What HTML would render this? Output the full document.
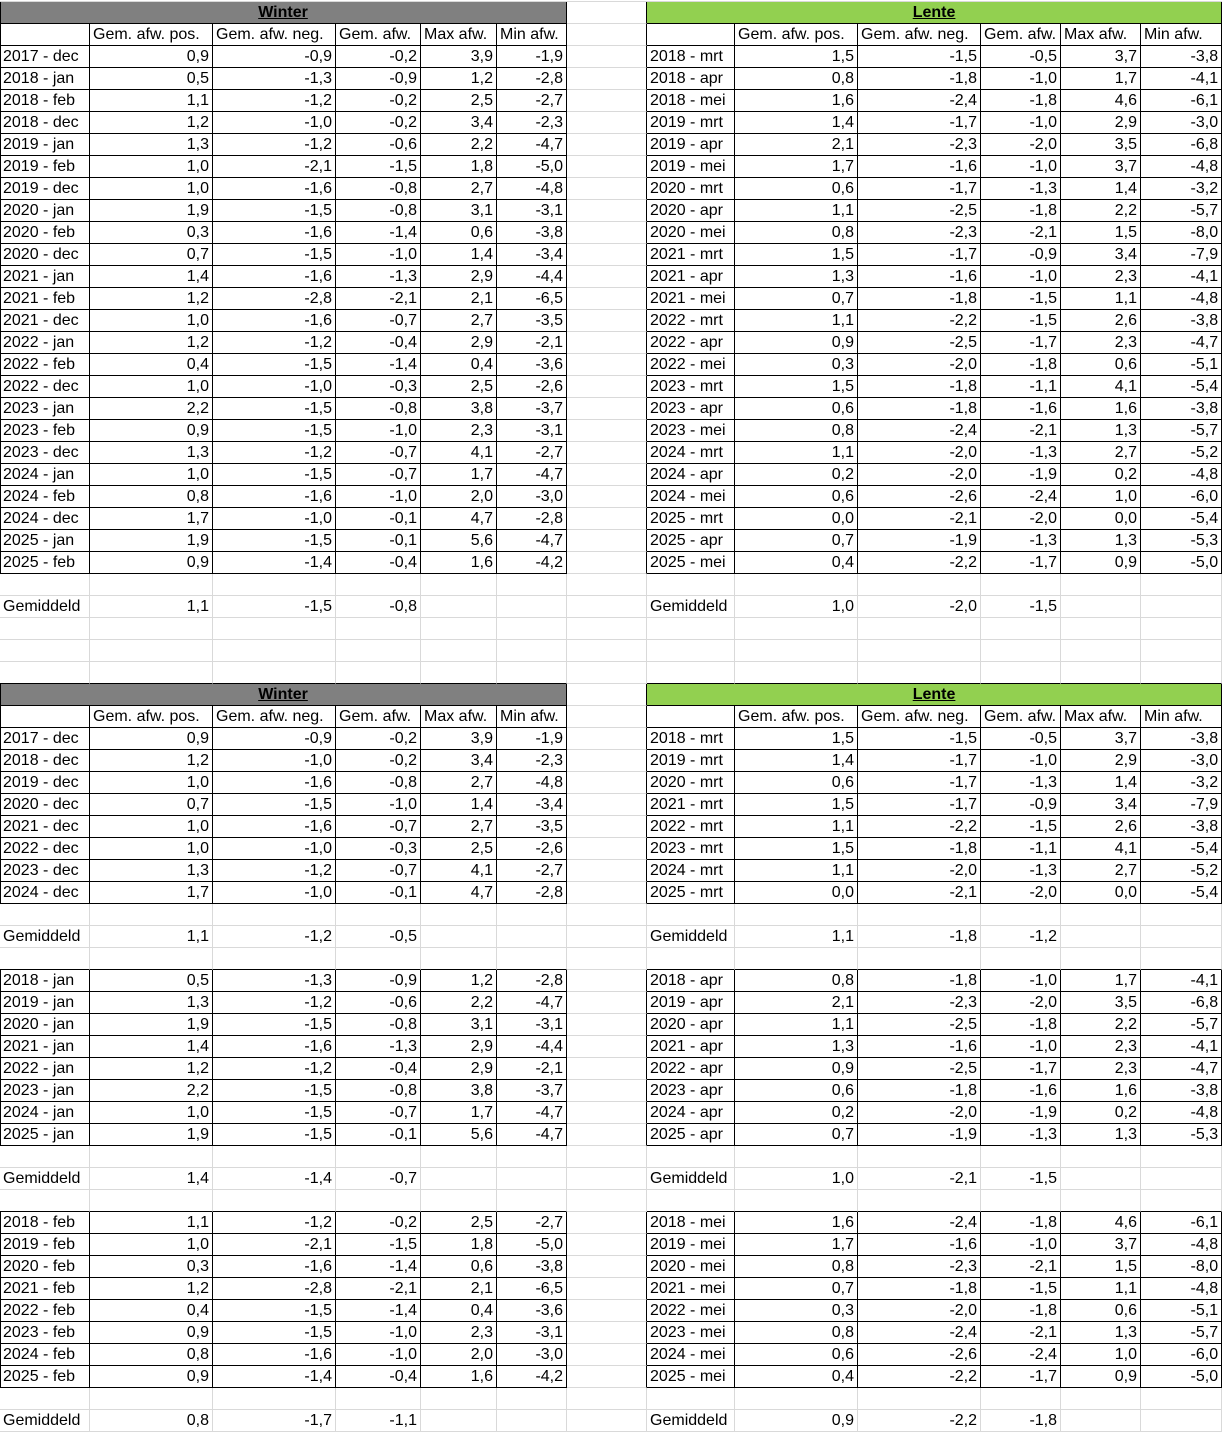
<!DOCTYPE html>
<html><head><meta charset="utf-8"><style>
html,body{margin:0;padding:0;background:#fff;}
body{padding-top:1px;}
table{border-collapse:separate;border-spacing:0;table-layout:fixed;width:1222px;font-family:"Liberation Sans",Arial,sans-serif;font-size:16px;color:#000;border-top:1px solid #d9d9d9;}
td{height:20px;padding:1px 3px 0 3px;border-right:1px solid #d9d9d9;border-bottom:1px solid #d9d9d9;text-align:right;white-space:nowrap;overflow:hidden;line-height:20px;}
tr td:first-child,td.g+td{text-align:left;}
tr.d td{border-right-color:#000;border-bottom-color:#000;}
tr.d td.g{border-bottom-color:#d9d9d9;}
tr.d td:first-child{box-shadow:inset 1px 0 #000;}
tr.a td{border-bottom-color:#000;}
tr.a td.g{border-bottom-color:#d9d9d9;}
td.w{background:#808080;text-align:center!important;font-weight:bold;text-decoration:underline;}
td.n{background:#92d050;text-align:center!important;font-weight:bold;text-decoration:underline;}
tr.h td{text-align:left;}
</style></head><body>
<table>
<colgroup><col style="width:90px"><col style="width:123px"><col style="width:123px"><col style="width:85px"><col style="width:76px"><col style="width:70px"><col style="width:80px"><col style="width:88px"><col style="width:123px"><col style="width:123px"><col style="width:80px"><col style="width:80px"><col style="width:81px"></colgroup>
<tr class="d"><td colspan="6" class="w">Winter</td><td class="g"></td><td colspan="6" class="n">Lente</td></tr>
<tr class="d h"><td></td><td>Gem. afw. pos.</td><td>Gem. afw. neg.</td><td>Gem. afw.</td><td>Max afw.</td><td>Min afw.</td><td class="g"></td><td></td><td>Gem. afw. pos.</td><td>Gem. afw. neg.</td><td>Gem. afw.</td><td>Max afw.</td><td>Min afw.</td></tr>
<tr class="d"><td>2017 - dec</td><td>0,9</td><td>-0,9</td><td>-0,2</td><td>3,9</td><td>-1,9</td><td class="g"></td><td>2018 - mrt</td><td>1,5</td><td>-1,5</td><td>-0,5</td><td>3,7</td><td>-3,8</td></tr>
<tr class="d"><td>2018 - jan</td><td>0,5</td><td>-1,3</td><td>-0,9</td><td>1,2</td><td>-2,8</td><td class="g"></td><td>2018 - apr</td><td>0,8</td><td>-1,8</td><td>-1,0</td><td>1,7</td><td>-4,1</td></tr>
<tr class="d"><td>2018 - feb</td><td>1,1</td><td>-1,2</td><td>-0,2</td><td>2,5</td><td>-2,7</td><td class="g"></td><td>2018 - mei</td><td>1,6</td><td>-2,4</td><td>-1,8</td><td>4,6</td><td>-6,1</td></tr>
<tr class="d"><td>2018 - dec</td><td>1,2</td><td>-1,0</td><td>-0,2</td><td>3,4</td><td>-2,3</td><td class="g"></td><td>2019 - mrt</td><td>1,4</td><td>-1,7</td><td>-1,0</td><td>2,9</td><td>-3,0</td></tr>
<tr class="d"><td>2019 - jan</td><td>1,3</td><td>-1,2</td><td>-0,6</td><td>2,2</td><td>-4,7</td><td class="g"></td><td>2019 - apr</td><td>2,1</td><td>-2,3</td><td>-2,0</td><td>3,5</td><td>-6,8</td></tr>
<tr class="d"><td>2019 - feb</td><td>1,0</td><td>-2,1</td><td>-1,5</td><td>1,8</td><td>-5,0</td><td class="g"></td><td>2019 - mei</td><td>1,7</td><td>-1,6</td><td>-1,0</td><td>3,7</td><td>-4,8</td></tr>
<tr class="d"><td>2019 - dec</td><td>1,0</td><td>-1,6</td><td>-0,8</td><td>2,7</td><td>-4,8</td><td class="g"></td><td>2020 - mrt</td><td>0,6</td><td>-1,7</td><td>-1,3</td><td>1,4</td><td>-3,2</td></tr>
<tr class="d"><td>2020 - jan</td><td>1,9</td><td>-1,5</td><td>-0,8</td><td>3,1</td><td>-3,1</td><td class="g"></td><td>2020 - apr</td><td>1,1</td><td>-2,5</td><td>-1,8</td><td>2,2</td><td>-5,7</td></tr>
<tr class="d"><td>2020 - feb</td><td>0,3</td><td>-1,6</td><td>-1,4</td><td>0,6</td><td>-3,8</td><td class="g"></td><td>2020 - mei</td><td>0,8</td><td>-2,3</td><td>-2,1</td><td>1,5</td><td>-8,0</td></tr>
<tr class="d"><td>2020 - dec</td><td>0,7</td><td>-1,5</td><td>-1,0</td><td>1,4</td><td>-3,4</td><td class="g"></td><td>2021 - mrt</td><td>1,5</td><td>-1,7</td><td>-0,9</td><td>3,4</td><td>-7,9</td></tr>
<tr class="d"><td>2021 - jan</td><td>1,4</td><td>-1,6</td><td>-1,3</td><td>2,9</td><td>-4,4</td><td class="g"></td><td>2021 - apr</td><td>1,3</td><td>-1,6</td><td>-1,0</td><td>2,3</td><td>-4,1</td></tr>
<tr class="d"><td>2021 - feb</td><td>1,2</td><td>-2,8</td><td>-2,1</td><td>2,1</td><td>-6,5</td><td class="g"></td><td>2021 - mei</td><td>0,7</td><td>-1,8</td><td>-1,5</td><td>1,1</td><td>-4,8</td></tr>
<tr class="d"><td>2021 - dec</td><td>1,0</td><td>-1,6</td><td>-0,7</td><td>2,7</td><td>-3,5</td><td class="g"></td><td>2022 - mrt</td><td>1,1</td><td>-2,2</td><td>-1,5</td><td>2,6</td><td>-3,8</td></tr>
<tr class="d"><td>2022 - jan</td><td>1,2</td><td>-1,2</td><td>-0,4</td><td>2,9</td><td>-2,1</td><td class="g"></td><td>2022 - apr</td><td>0,9</td><td>-2,5</td><td>-1,7</td><td>2,3</td><td>-4,7</td></tr>
<tr class="d"><td>2022 - feb</td><td>0,4</td><td>-1,5</td><td>-1,4</td><td>0,4</td><td>-3,6</td><td class="g"></td><td>2022 - mei</td><td>0,3</td><td>-2,0</td><td>-1,8</td><td>0,6</td><td>-5,1</td></tr>
<tr class="d"><td>2022 - dec</td><td>1,0</td><td>-1,0</td><td>-0,3</td><td>2,5</td><td>-2,6</td><td class="g"></td><td>2023 - mrt</td><td>1,5</td><td>-1,8</td><td>-1,1</td><td>4,1</td><td>-5,4</td></tr>
<tr class="d"><td>2023 - jan</td><td>2,2</td><td>-1,5</td><td>-0,8</td><td>3,8</td><td>-3,7</td><td class="g"></td><td>2023 - apr</td><td>0,6</td><td>-1,8</td><td>-1,6</td><td>1,6</td><td>-3,8</td></tr>
<tr class="d"><td>2023 - feb</td><td>0,9</td><td>-1,5</td><td>-1,0</td><td>2,3</td><td>-3,1</td><td class="g"></td><td>2023 - mei</td><td>0,8</td><td>-2,4</td><td>-2,1</td><td>1,3</td><td>-5,7</td></tr>
<tr class="d"><td>2023 - dec</td><td>1,3</td><td>-1,2</td><td>-0,7</td><td>4,1</td><td>-2,7</td><td class="g"></td><td>2024 - mrt</td><td>1,1</td><td>-2,0</td><td>-1,3</td><td>2,7</td><td>-5,2</td></tr>
<tr class="d"><td>2024 - jan</td><td>1,0</td><td>-1,5</td><td>-0,7</td><td>1,7</td><td>-4,7</td><td class="g"></td><td>2024 - apr</td><td>0,2</td><td>-2,0</td><td>-1,9</td><td>0,2</td><td>-4,8</td></tr>
<tr class="d"><td>2024 - feb</td><td>0,8</td><td>-1,6</td><td>-1,0</td><td>2,0</td><td>-3,0</td><td class="g"></td><td>2024 - mei</td><td>0,6</td><td>-2,6</td><td>-2,4</td><td>1,0</td><td>-6,0</td></tr>
<tr class="d"><td>2024 - dec</td><td>1,7</td><td>-1,0</td><td>-0,1</td><td>4,7</td><td>-2,8</td><td class="g"></td><td>2025 - mrt</td><td>0,0</td><td>-2,1</td><td>-2,0</td><td>0,0</td><td>-5,4</td></tr>
<tr class="d"><td>2025 - jan</td><td>1,9</td><td>-1,5</td><td>-0,1</td><td>5,6</td><td>-4,7</td><td class="g"></td><td>2025 - apr</td><td>0,7</td><td>-1,9</td><td>-1,3</td><td>1,3</td><td>-5,3</td></tr>
<tr class="d"><td>2025 - feb</td><td>0,9</td><td>-1,4</td><td>-0,4</td><td>1,6</td><td>-4,2</td><td class="g"></td><td>2025 - mei</td><td>0,4</td><td>-2,2</td><td>-1,7</td><td>0,9</td><td>-5,0</td></tr>
<tr><td></td><td></td><td></td><td></td><td></td><td></td><td class="g"></td><td></td><td></td><td></td><td></td><td></td><td></td></tr>
<tr><td>Gemiddeld</td><td>1,1</td><td>-1,5</td><td>-0,8</td><td></td><td></td><td class="g"></td><td>Gemiddeld</td><td>1,0</td><td>-2,0</td><td>-1,5</td><td></td><td></td></tr>
<tr><td></td><td></td><td></td><td></td><td></td><td></td><td class="g"></td><td></td><td></td><td></td><td></td><td></td><td></td></tr>
<tr><td></td><td></td><td></td><td></td><td></td><td></td><td class="g"></td><td></td><td></td><td></td><td></td><td></td><td></td></tr>
<tr class="a"><td></td><td></td><td></td><td></td><td></td><td></td><td class="g"></td><td></td><td></td><td></td><td></td><td></td><td></td></tr>
<tr class="d"><td colspan="6" class="w">Winter</td><td class="g"></td><td colspan="6" class="n">Lente</td></tr>
<tr class="d h"><td></td><td>Gem. afw. pos.</td><td>Gem. afw. neg.</td><td>Gem. afw.</td><td>Max afw.</td><td>Min afw.</td><td class="g"></td><td></td><td>Gem. afw. pos.</td><td>Gem. afw. neg.</td><td>Gem. afw.</td><td>Max afw.</td><td>Min afw.</td></tr>
<tr class="d"><td>2017 - dec</td><td>0,9</td><td>-0,9</td><td>-0,2</td><td>3,9</td><td>-1,9</td><td class="g"></td><td>2018 - mrt</td><td>1,5</td><td>-1,5</td><td>-0,5</td><td>3,7</td><td>-3,8</td></tr>
<tr class="d"><td>2018 - dec</td><td>1,2</td><td>-1,0</td><td>-0,2</td><td>3,4</td><td>-2,3</td><td class="g"></td><td>2019 - mrt</td><td>1,4</td><td>-1,7</td><td>-1,0</td><td>2,9</td><td>-3,0</td></tr>
<tr class="d"><td>2019 - dec</td><td>1,0</td><td>-1,6</td><td>-0,8</td><td>2,7</td><td>-4,8</td><td class="g"></td><td>2020 - mrt</td><td>0,6</td><td>-1,7</td><td>-1,3</td><td>1,4</td><td>-3,2</td></tr>
<tr class="d"><td>2020 - dec</td><td>0,7</td><td>-1,5</td><td>-1,0</td><td>1,4</td><td>-3,4</td><td class="g"></td><td>2021 - mrt</td><td>1,5</td><td>-1,7</td><td>-0,9</td><td>3,4</td><td>-7,9</td></tr>
<tr class="d"><td>2021 - dec</td><td>1,0</td><td>-1,6</td><td>-0,7</td><td>2,7</td><td>-3,5</td><td class="g"></td><td>2022 - mrt</td><td>1,1</td><td>-2,2</td><td>-1,5</td><td>2,6</td><td>-3,8</td></tr>
<tr class="d"><td>2022 - dec</td><td>1,0</td><td>-1,0</td><td>-0,3</td><td>2,5</td><td>-2,6</td><td class="g"></td><td>2023 - mrt</td><td>1,5</td><td>-1,8</td><td>-1,1</td><td>4,1</td><td>-5,4</td></tr>
<tr class="d"><td>2023 - dec</td><td>1,3</td><td>-1,2</td><td>-0,7</td><td>4,1</td><td>-2,7</td><td class="g"></td><td>2024 - mrt</td><td>1,1</td><td>-2,0</td><td>-1,3</td><td>2,7</td><td>-5,2</td></tr>
<tr class="d"><td>2024 - dec</td><td>1,7</td><td>-1,0</td><td>-0,1</td><td>4,7</td><td>-2,8</td><td class="g"></td><td>2025 - mrt</td><td>0,0</td><td>-2,1</td><td>-2,0</td><td>0,0</td><td>-5,4</td></tr>
<tr><td></td><td></td><td></td><td></td><td></td><td></td><td class="g"></td><td></td><td></td><td></td><td></td><td></td><td></td></tr>
<tr><td>Gemiddeld</td><td>1,1</td><td>-1,2</td><td>-0,5</td><td></td><td></td><td class="g"></td><td>Gemiddeld</td><td>1,1</td><td>-1,8</td><td>-1,2</td><td></td><td></td></tr>
<tr class="a"><td></td><td></td><td></td><td></td><td></td><td></td><td class="g"></td><td></td><td></td><td></td><td></td><td></td><td></td></tr>
<tr class="d"><td>2018 - jan</td><td>0,5</td><td>-1,3</td><td>-0,9</td><td>1,2</td><td>-2,8</td><td class="g"></td><td>2018 - apr</td><td>0,8</td><td>-1,8</td><td>-1,0</td><td>1,7</td><td>-4,1</td></tr>
<tr class="d"><td>2019 - jan</td><td>1,3</td><td>-1,2</td><td>-0,6</td><td>2,2</td><td>-4,7</td><td class="g"></td><td>2019 - apr</td><td>2,1</td><td>-2,3</td><td>-2,0</td><td>3,5</td><td>-6,8</td></tr>
<tr class="d"><td>2020 - jan</td><td>1,9</td><td>-1,5</td><td>-0,8</td><td>3,1</td><td>-3,1</td><td class="g"></td><td>2020 - apr</td><td>1,1</td><td>-2,5</td><td>-1,8</td><td>2,2</td><td>-5,7</td></tr>
<tr class="d"><td>2021 - jan</td><td>1,4</td><td>-1,6</td><td>-1,3</td><td>2,9</td><td>-4,4</td><td class="g"></td><td>2021 - apr</td><td>1,3</td><td>-1,6</td><td>-1,0</td><td>2,3</td><td>-4,1</td></tr>
<tr class="d"><td>2022 - jan</td><td>1,2</td><td>-1,2</td><td>-0,4</td><td>2,9</td><td>-2,1</td><td class="g"></td><td>2022 - apr</td><td>0,9</td><td>-2,5</td><td>-1,7</td><td>2,3</td><td>-4,7</td></tr>
<tr class="d"><td>2023 - jan</td><td>2,2</td><td>-1,5</td><td>-0,8</td><td>3,8</td><td>-3,7</td><td class="g"></td><td>2023 - apr</td><td>0,6</td><td>-1,8</td><td>-1,6</td><td>1,6</td><td>-3,8</td></tr>
<tr class="d"><td>2024 - jan</td><td>1,0</td><td>-1,5</td><td>-0,7</td><td>1,7</td><td>-4,7</td><td class="g"></td><td>2024 - apr</td><td>0,2</td><td>-2,0</td><td>-1,9</td><td>0,2</td><td>-4,8</td></tr>
<tr class="d"><td>2025 - jan</td><td>1,9</td><td>-1,5</td><td>-0,1</td><td>5,6</td><td>-4,7</td><td class="g"></td><td>2025 - apr</td><td>0,7</td><td>-1,9</td><td>-1,3</td><td>1,3</td><td>-5,3</td></tr>
<tr><td></td><td></td><td></td><td></td><td></td><td></td><td class="g"></td><td></td><td></td><td></td><td></td><td></td><td></td></tr>
<tr><td>Gemiddeld</td><td>1,4</td><td>-1,4</td><td>-0,7</td><td></td><td></td><td class="g"></td><td>Gemiddeld</td><td>1,0</td><td>-2,1</td><td>-1,5</td><td></td><td></td></tr>
<tr class="a"><td></td><td></td><td></td><td></td><td></td><td></td><td class="g"></td><td></td><td></td><td></td><td></td><td></td><td></td></tr>
<tr class="d"><td>2018 - feb</td><td>1,1</td><td>-1,2</td><td>-0,2</td><td>2,5</td><td>-2,7</td><td class="g"></td><td>2018 - mei</td><td>1,6</td><td>-2,4</td><td>-1,8</td><td>4,6</td><td>-6,1</td></tr>
<tr class="d"><td>2019 - feb</td><td>1,0</td><td>-2,1</td><td>-1,5</td><td>1,8</td><td>-5,0</td><td class="g"></td><td>2019 - mei</td><td>1,7</td><td>-1,6</td><td>-1,0</td><td>3,7</td><td>-4,8</td></tr>
<tr class="d"><td>2020 - feb</td><td>0,3</td><td>-1,6</td><td>-1,4</td><td>0,6</td><td>-3,8</td><td class="g"></td><td>2020 - mei</td><td>0,8</td><td>-2,3</td><td>-2,1</td><td>1,5</td><td>-8,0</td></tr>
<tr class="d"><td>2021 - feb</td><td>1,2</td><td>-2,8</td><td>-2,1</td><td>2,1</td><td>-6,5</td><td class="g"></td><td>2021 - mei</td><td>0,7</td><td>-1,8</td><td>-1,5</td><td>1,1</td><td>-4,8</td></tr>
<tr class="d"><td>2022 - feb</td><td>0,4</td><td>-1,5</td><td>-1,4</td><td>0,4</td><td>-3,6</td><td class="g"></td><td>2022 - mei</td><td>0,3</td><td>-2,0</td><td>-1,8</td><td>0,6</td><td>-5,1</td></tr>
<tr class="d"><td>2023 - feb</td><td>0,9</td><td>-1,5</td><td>-1,0</td><td>2,3</td><td>-3,1</td><td class="g"></td><td>2023 - mei</td><td>0,8</td><td>-2,4</td><td>-2,1</td><td>1,3</td><td>-5,7</td></tr>
<tr class="d"><td>2024 - feb</td><td>0,8</td><td>-1,6</td><td>-1,0</td><td>2,0</td><td>-3,0</td><td class="g"></td><td>2024 - mei</td><td>0,6</td><td>-2,6</td><td>-2,4</td><td>1,0</td><td>-6,0</td></tr>
<tr class="d"><td>2025 - feb</td><td>0,9</td><td>-1,4</td><td>-0,4</td><td>1,6</td><td>-4,2</td><td class="g"></td><td>2025 - mei</td><td>0,4</td><td>-2,2</td><td>-1,7</td><td>0,9</td><td>-5,0</td></tr>
<tr><td></td><td></td><td></td><td></td><td></td><td></td><td class="g"></td><td></td><td></td><td></td><td></td><td></td><td></td></tr>
<tr><td>Gemiddeld</td><td>0,8</td><td>-1,7</td><td>-1,1</td><td></td><td></td><td class="g"></td><td>Gemiddeld</td><td>0,9</td><td>-2,2</td><td>-1,8</td><td></td><td></td></tr>
</table>
</body></html>
